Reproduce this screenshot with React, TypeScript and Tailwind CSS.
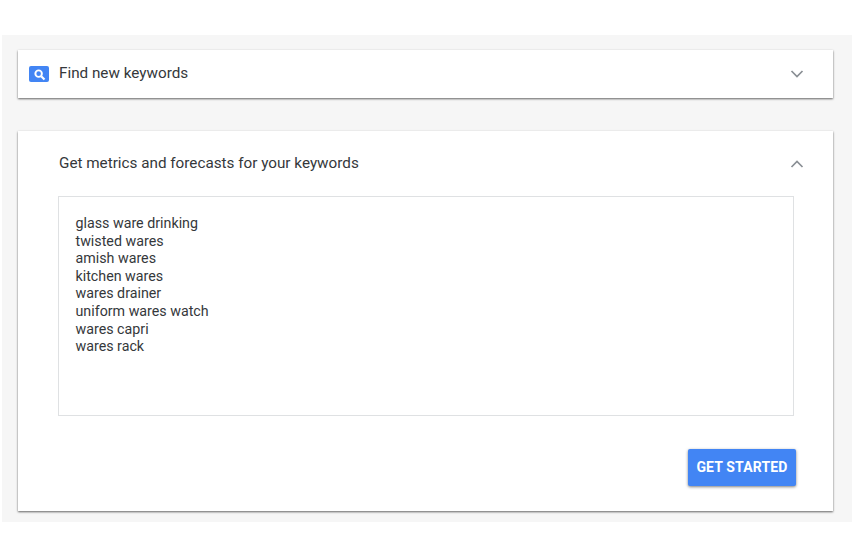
import React from "react";

const App: React.FC = () => {
  const keywords = [
    "glass ware drinking",
    "twisted wares",
    "amish wares",
    "kitchen wares",
    "wares drainer",
    "uniform wares watch",
    "wares capri",
    "wares rack",
  ];

  return (
    <div className="h-[558px] w-[852px] overflow-hidden bg-white pt-[35px] pl-[2px] font-['Roboto',sans-serif] text-[#35383b]">
      <div className="h-[487px] bg-[#f6f6f6] pt-[15px] pr-[19px] pl-[16px]">
        {/* find new keywords */}
        <div className="flex h-[48px] items-center bg-white pr-[29px] pl-[11px] shadow-[0_1px_2px_rgba(0,0,0,0.6)]">
          <div className="flex h-[16px] w-[20px] items-center justify-center rounded-[2px] bg-[#4285f4]">
            <svg width="13" height="13" viewBox="0 0 12 12" fill="none" stroke="white">
              <circle cx="5.2" cy="5.2" r="3" strokeWidth="1.8" />
              <path d="M7.6 7.6L10.6 10.6" strokeWidth="2" />
            </svg>
          </div>
          <span className="ml-[10px] -translate-y-px text-[15.25px]">Find new keywords</span>
          <svg className="ml-auto" width="14" height="10" viewBox="0 0 14 10" fill="none" stroke="#8a8f94" strokeWidth="1.7">
            <path d="M1.5 2L7 7.5L12.5 2" />
          </svg>
        </div>

        {/* metrics and forecasts */}
        <div className="mt-[33px] h-[380px] bg-white pt-[23px] pr-[36px] pl-[40px] shadow-[0_1px_2px_rgba(0,0,0,0.6)]">
          <div className="flex h-[20px] items-center pl-[1px]">
            <span className="-translate-y-px text-[15.25px]">Get metrics and forecasts for your keywords</span>
            <svg className="mt-0 ml-auto -mr-[7px]" width="14" height="10" viewBox="0 0 14 10" fill="none" stroke="#8a8f94" strokeWidth="1.7">
              <path d="M1.5 8L7 2.5L12.5 8" />
            </svg>
          </div>
          <div className="mt-[22px] h-[220px] w-[736px] border border-[#dfe1e3] pt-[18px] pl-[16.5px] text-[14.25px] leading-[17.6px] text-[#35383b]">
            {keywords.map((k) => (
              <div key={k}>{k}</div>
            ))}
          </div>
          <div className="mt-[33px] flex w-[738px] justify-end">
            <button className="h-[37px] w-[108px] rounded-[2px] bg-[#4285f4] text-[14px] font-bold tracking-[0.15px] text-white shadow-[0_1px_3px_rgba(0,0,0,0.5)]">
              GET STARTED
            </button>
          </div>
        </div>
      </div>
    </div>
  );
};

export default App;
